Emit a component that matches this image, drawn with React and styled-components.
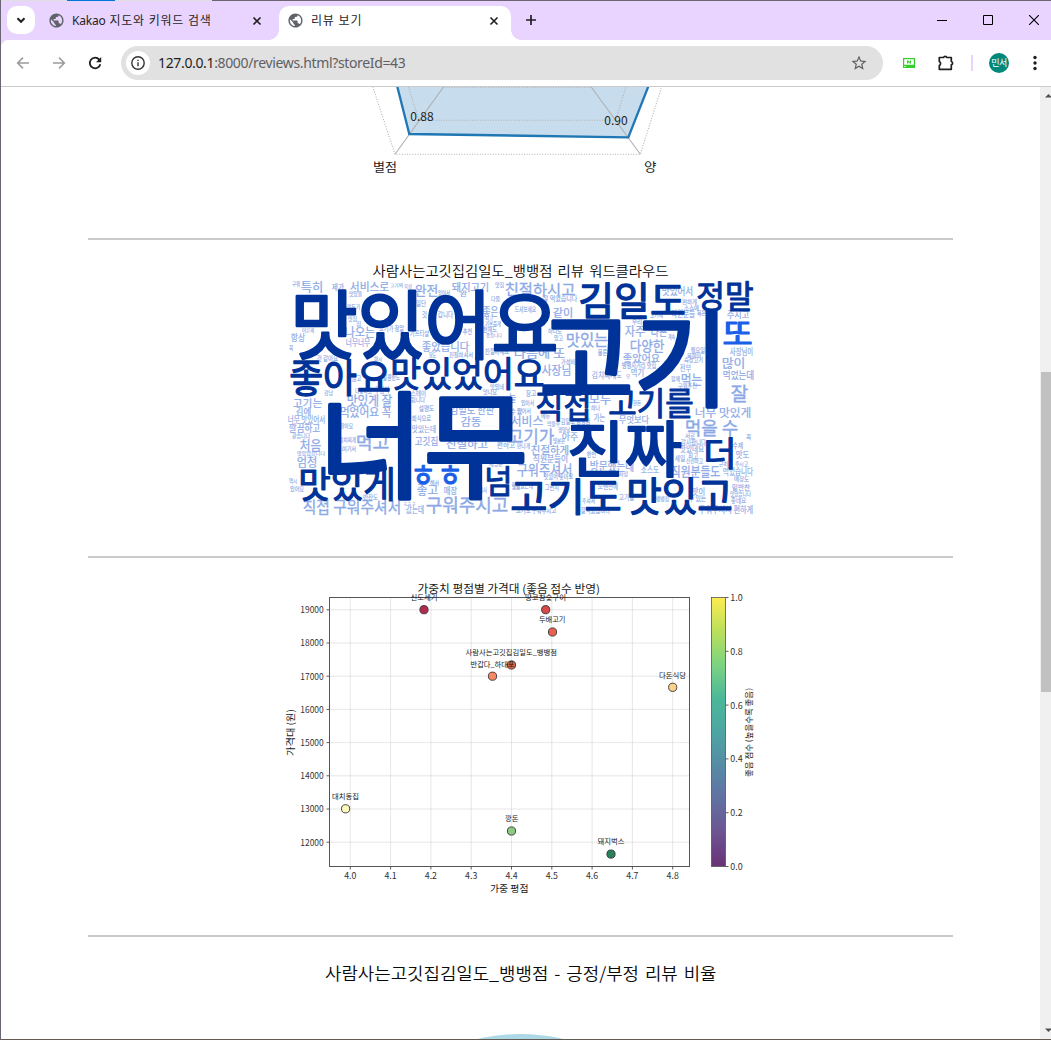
import React from "react";
import styled, { createGlobalStyle, css } from "styled-components";

const GlobalStyle = createGlobalStyle`
  *, *::before, *::after { box-sizing: border-box; }
  html, body { margin: 0; padding: 0; background: #fff; overflow: hidden; }
  body { font-family: "Noto Sans", "Noto Sans CJK KR", sans-serif; }
  svg { display: block; flex: none; }
`;

/* ---------- window chrome ---------- */

const Window = styled.div`
  width: 1051px;
  height: 1040px;
  display: flex;
  flex-direction: column;
  overflow: hidden;
  border-left: 1px solid #6d6572;
  border-bottom: 1px solid #635b53;
  background: #fff;
`;

const TopEdge = styled.div`
  height: 1px;
  flex: none;
  background: linear-gradient(to right, #dedede 66px, #0078d7 66px 114px, #dedede 114px 211px, #6d6572 211px);
`;

const TabStrip = styled.div`
  height: 39px;
  flex: none;
  display: flex;
  padding: 5px 0 0 6px;
  background: #e8d4fe;
`;

const TabSearch = styled.button`
  width: 28px;
  height: 28px;
  padding: 0;
  border: 0;
  border-radius: 10px;
  background: #fff;
  display: grid;
  place-items: center;
`;

const Tab = styled.div`
  position: relative;
  height: 34px;
  width: ${(p) => p.$width}px;
  display: flex;
  align-items: center;
  padding: 0 9px 5px 8px;
  gap: ${(p) => p.$gap}px;
  margin-left: ${(p) => p.$offset}px;
  ${(p) =>
    p.$active &&
    css`
      background: #fff;
      border-radius: 10px 10px 0 0;
      &::before,
      &::after {
        content: "";
        position: absolute;
        bottom: 0;
        width: 10px;
        height: 10px;
      }
      &::before {
        left: -10px;
        background: radial-gradient(circle at 0 0, transparent 9.5px, #fff 10px);
      }
      &::after {
        right: -10px;
        background: radial-gradient(circle at 100% 0, transparent 9.5px, #fff 10px);
      }
    `}
`;

const TabTitle = styled.span`
  flex: 1;
  font-size: 12px;
  line-height: 20px;
  letter-spacing: ${(p) => p.$tracking}px;
  color: #1f1f1f;
  white-space: nowrap;
  padding-top: 1px;
`;

const Latin = styled.span`
  letter-spacing: -0.2px;
`;

const NewTab = styled.div`
  margin-left: 13px;
  height: 28px;
  display: flex;
  align-items: center;
`;

const WindowControls = styled.div`
  margin-left: auto;
  height: 28px;
  display: flex;
  align-items: center;
  gap: 36px;
  padding-right: 12px;
`;

const Toolbar = styled.div`
  height: 47px;
  flex: none;
  display: flex;
  align-items: center;
  border-bottom: 1px solid #cbcbcb;
  background: radial-gradient(circle at 8px 8px, #fff 8px, transparent 8.5px) 0 0 / 8px 8px no-repeat,
    linear-gradient(#fff, #fff) 8px 0 no-repeat,
    linear-gradient(#fff, #fff) 0 8px no-repeat, #e8d4fe;
`;

const NavButtons = styled.div`
  display: flex;
  gap: 20px;
  padding-left: 14px;
  width: 120px;
`;

const Omnibox = styled.div`
  width: 762px;
  height: 34px;
  border-radius: 17px;
  background: #e1e1e1;
  display: flex;
  align-items: center;
  padding: 0 15px 0 5px;
`;

const SiteInfo = styled.span`
  width: 24px;
  height: 24px;
  border-radius: 50%;
  background: #fff;
  display: grid;
  place-items: center;
  margin-right: 8px;
`;

const Address = styled.span`
  flex: 1;
  font-size: 14px;
  line-height: 20px;
  letter-spacing: -0.35px;
  color: #5f6063;
  b { font-weight: 400; color: #1f1f1f; }
`;

const Extensions = styled.div`
  display: flex;
  align-items: center;
  padding-left: 20px;
`;

const Divider = styled.span`
  width: 2px;
  height: 16px;
  background: #e8d4fe;
  margin: 0 16px;
`;

const Avatar = styled.span`
  width: 20px;
  height: 20px;
  border-radius: 50%;
  background: #00897b;
  color: #fff;
  font-size: 9px;
  line-height: 19px;
  text-align: center;
  letter-spacing: -0.6px;
  margin-right: 24px;
`;

/* ---------- page ---------- */

const Viewport = styled.div`
  flex: 1;
  min-height: 0;
  display: flex;
`;

const Page = styled.main`
  width: 1039px;
  display: flex;
  flex-direction: column;
  align-items: center;
  overflow: hidden;
`;

const Rule = styled.hr`
  width: 865px;
  height: 2px;
  flex: none;
  border: 0;
  margin: 0;
  background: #cacaca;
`;

const ScrollBar = styled.div`
  width: 11px;
  height: 100%;
  flex: none;
  overflow: hidden;
  background: #f0f0f0;
  display: flex;
  flex-direction: column;
`;

const ScrollArrow = styled.div`
  height: 17px;
  padding: 6px 0 0 5px;
`;

const Thumb = styled.div`
  height: 320px;
  margin: 268px 0 auto 1px;
  background: #c1c1c1;
`;

const Figure = styled.svg`
  font-family: "Noto Sans CJK KR", sans-serif;
`;

const Heading = styled.g`
  font-weight: 350;
  word-spacing: 0.12em;
  fill: #0a0a0a;
`;

const Words = styled.g`
  fill: ${(p) => p.$color};
  stroke: ${(p) => p.$color};
  stroke-linejoin: round;
`;

/* ---------- icons ---------- */

const Globe = () => (
  <svg width="17" height="17" viewBox="0 0 24 24" fill="#5f6368">
    <path d="M12 2C6.480 2 2 6.480 2 12s4.480 10 10 10 10-4.480 10-10S17.520 2 12 2zm-1 17.930c-3.950-.49-7-3.850-7-7.930 0-.62.08-1.210.21-1.790L9 15v1c0 1.100.9 2 2 2v1.930zm6.900-2.540c-.26-.81-1-1.390-1.900-1.390h-1v-3c0-.55-.45-1-1-1H8v-2h2c.55 0 1-.45 1-1V7h2c1.100 0 2-.9 2-2v-.41c2.930 1.190 5 4.060 5 7.410 0 2.080-.8 3.970-2.100 5.390z" />
  </svg>
);

const Stroke = ({ size = 16, width = 1.6, color = "#1f1f1f", d }) => (
  <svg width={size} height={size} viewBox={`0 0 ${size} ${size}`} fill="none" stroke={color} strokeWidth={width}>
    <path d={d} />
  </svg>
);

const CloseIcon = () => <Stroke width={1.6} d="M4.500 4.500l7 7M11.500 4.500l-7 7" />;

/* ---------- chart text ---------- */

// Places a label so that it fills the given horizontal span.
const Label = ({ x1, x2, y, size, children, ...rest }) => (
  <text x={x1} y={y} fontSize={size} textLength={x2 - x1} lengthAdjust="spacingAndGlyphs" {...rest}>
    {children}
  </text>
);

const Radar = () => (
  <Figure width="865" height="151" viewBox="88 87 865 151">
    <path d="M397.3 86.7L409.3 134 628.3 137.3 648.3 86.7z" fill="#c7dcec" />
    <g fill="none" stroke="#b0b0b0" strokeWidth="1.1">
      <path d="M395 154.3L443.7 86.7M640.3 154.3L591 86.7" />
      <path d="M372.7 86.7L395 154.3H640.3L661.7 86.7M408.3 86.7L419 120.3H615.7L626 86.7M443.7 87.3H591" strokeDasharray="1 1.6" />
    </g>
    <path d="M396.8 84.7L409.3 134 628.3 137.3 649 84.7" fill="none" stroke="#1f77b4" strokeWidth="2.3" />
    <g fill="#1c1c1c">
      <Label x1={410.3} x2={433.7} y={121} size={12}>0.88</Label>
      <Label x1={604.3} x2={627.7} y={124.700} size={12}>0.90</Label>
      <Label x1={373} x2={397} y={171.5} size={12.5}>별점</Label>
      <Label x1={644} x2={656.5} y={171.5} size={12.5}>양</Label>
    </g>
  </Figure>
);

/* Each word carries the box that its glyphs fill: left, top, right, bottom. */
const headWords = [
  ["맛있어요", 292, 290, 557, 359],
  ["고기", 541, 311, 727, 407],
  ["너무", 321, 392, 526, 499],
  ["김일도", 579, 282, 685, 318],
  ["정말", 697, 282, 753, 311],
  ["좋아요", 290, 359, 390, 395],
  ["맛있었어요", 391, 358, 544, 390],
  ["직접", 536, 392, 591, 421],
  ["고기를", 609, 389, 693, 418],
  ["진짜", 568, 421, 681, 477],
  ["더", 704, 438, 736, 469],
  ["고기도", 511, 478, 621, 514],
  ["맛있고", 627, 477, 732, 514],
  ["넘", 485, 467, 512, 496],
  ["맛있게", 299, 468, 395, 501],
];

const accentWords = [
  ["또", 723, 319, 752, 346],
  ["ㅎ", 411, 461, 435, 489],
  ["ㅎ", 438, 461, 462, 489],
];

const minorWords = [
  ["구워", 292, 281, 300, 286], ["특히", 301, 282, 323, 293], ["제가", 332, 284, 344, 291],
  ["서비스로", 350, 282, 389, 292], ["고기의", 390, 283, 403, 287], ["육상", 404, 284, 412, 288],
  ["맛있을", 349, 291, 362, 296], ["완전", 415, 284, 438, 296], ["있어서", 438, 290, 450, 295],
  ["돼지고기", 452, 283, 489, 292], ["완", 460, 291, 467, 297], ["맛집", 495, 282, 504, 287],
  ["친절하시고", 505, 282, 575, 296], ["다들", 491, 296, 500, 301], ["잘 먹었습니다", 543, 296, 577, 302],
  ["일단", 416, 301, 426, 307], ["깍두기", 347, 304, 360, 309], ["맛집", 348, 316, 357, 321],
  ["집", 356, 321, 361, 326], ["것", 422, 312, 427, 318], ["갑니다", 438, 312, 453, 318],
  ["어른께", 302, 328, 314, 332], ["고기가 정말", 379, 326, 404, 332], ["기프티샬", 410, 331, 429, 337],
  ["추천", 463, 329, 472, 335], ["좋은", 483, 307, 498, 317], ["최고", 485, 316, 493, 320],
  ["기본중게", 485, 321, 501, 326], ["현재도", 483, 327, 497, 333], ["좋습니다", 486, 333, 502, 337],
  ["드셔보세요", 515, 307, 536, 313], ["같이", 553, 308, 573, 318], ["술", 551, 319, 556, 324],
  ["하나도", 548, 328, 562, 333], ["있고", 554, 335, 563, 340], ["항상", 291, 334, 305, 342],
  ["꼭", 289, 345, 293, 350], ["것 같아요", 317, 356, 338, 362], ["하시", 374, 356, 382, 361],
  ["나오는", 345, 327, 375, 338], ["너무너무", 346, 339, 370, 347], ["좋았습니다", 422, 342, 469, 352],
  ["달도", 429, 352, 436, 357], ["친절하셔서", 449, 352, 473, 357], ["친절하세요", 485, 349, 509, 355],
  ["다음에 또", 514, 348, 565, 359], ["맛있는", 566, 332, 608, 347], ["물론", 598, 350, 607, 356],
  ["가성비", 561, 359, 575, 364], ["사장님", 542, 365, 571, 376], ["자주", 625, 326, 645, 337],
  ["다른", 651, 328, 667, 337], ["계속", 668, 334, 675, 339], ["다양한", 630, 339, 664, 352],
  ["좋았어요", 623, 354, 660, 363], ["뱅뱅사거리 맛집", 622, 363, 656, 369], ["김치찌개도", 592, 372, 622, 379],
  ["오", 626, 374, 630, 378], ["먹기", 631, 369, 644, 377], ["전부", 680, 365, 691, 372],
  ["함께", 671, 376, 680, 381], ["먹는", 681, 373, 702, 385], ["맛있어서", 662, 287, 693, 296],
  ["편하게", 682, 299, 697, 304], ["소스에", 684, 305, 699, 310], ["직원분들", 671, 310, 695, 318],
  ["볶은", 697, 310, 706, 315], ["고기에", 650, 312, 663, 317], ["우리", 632, 319, 642, 324],
  ["월요일", 691, 348, 705, 354], ["목살이", 687, 353, 701, 358], ["숙성고기", 684, 357, 703, 362],
  ["주시고", 727, 311, 749, 319], ["사장님이", 730, 348, 753, 356], ["많이", 722, 358, 745, 369],
  ["먹었는데", 723, 371, 754, 380], ["않고", 352, 376, 361, 382], ["달콤한도", 383, 375, 400, 381],
  ["고기는", 293, 399, 322, 408], ["강남", 324, 390, 333, 395], ["다양하고", 355, 388, 372, 393],
  ["구성이", 375, 387, 389, 394], ["맛있게 잘", 347, 394, 392, 406], ["김에", 296, 408, 311, 416],
  ["먹었어요 꼭", 340, 407, 391, 418], ["너무 맛있어서", 288, 416, 325, 424], ["깔끔하고", 289, 424, 320, 433],
  ["같습니다", 292, 433, 310, 438], ["처음", 300, 439, 321, 451], ["맛있었습니다", 297, 451, 325, 455],
  ["엄청", 297, 457, 317, 468], ["할아요", 340, 423, 353, 428], ["김치찌개", 339, 437, 356, 442],
  ["여기서", 342, 446, 356, 451], ["먹고", 356, 434, 389, 450], ["스테이", 411, 391, 426, 397],
  ["됩니다", 411, 397, 425, 402], ["설명도", 419, 406, 434, 412], ["회식으로", 412, 416, 431, 422],
  ["맛있는데", 412, 426, 436, 433], ["고깃집", 415, 437, 438, 446], ["김일도 한판", 450, 406, 494, 415],
  ["감동", 461, 417, 481, 427], ["친절하고", 446, 439, 488, 449], ["편하고", 497, 441, 515, 449],
  ["맛있네", 490, 384, 504, 389], ["맛나요", 483, 389, 497, 394], ["늘", 509, 394, 516, 403],
  ["수 있", 511, 409, 522, 415], ["역시", 289, 478, 297, 483], ["있어요", 290, 486, 304, 491],
  ["반찬도", 363, 494, 378, 499], ["해서", 430, 480, 439, 485], ["좋고", 417, 485, 438, 496],
  ["매장", 444, 487, 457, 495], ["재방문", 489, 461, 503, 466], ["직접 구워주셔서", 303, 499, 401, 514],
  ["ㅎㅎㅎ", 403, 501, 416, 505], ["갔는데", 406, 506, 424, 514], ["구워주시고", 426, 497, 508, 514],
  ["식사", 479, 487, 487, 492], ["맛있", 512, 484, 520, 489], ["모두", 589, 394, 611, 405],
  ["잘", 731, 385, 748, 403], ["구워주신", 678, 383, 697, 388], ["장고", 526, 391, 536, 397],
  ["있어서", 521, 400, 534, 405], ["있어서", 517, 408, 531, 413], ["메뉴", 541, 413, 550, 418],
  ["하나", 591, 405, 600, 410], ["한돈", 633, 400, 641, 405], ["서비스", 511, 416, 543, 427],
  ["먹을수", 547, 421, 560, 426], ["김일도 뱅뱅점", 561, 419, 590, 425], ["가는", 594, 414, 605, 422],
  ["무엇보다", 619, 416, 649, 424], ["너무 맛있게", 695, 408, 751, 418], ["먹을 수", 685, 420, 738, 437],
  ["고기가", 508, 428, 554, 444], ["생일날", 558, 427, 570, 432], ["몇분은", 553, 438, 565, 443],
  ["아주", 562, 433, 578, 441], ["만나게", 517, 443, 530, 448], ["친절하게", 531, 446, 569, 455],
  ["직원분들이", 533, 455, 568, 463], ["한번", 587, 452, 596, 458], ["구워주셔서", 517, 463, 572, 476],
  ["맛있어 좋아요", 544, 474, 573, 480], ["방문했는데", 590, 461, 634, 472], ["사장", 619, 471, 628, 476],
  ["소스도", 641, 466, 659, 474], ["직원분들도", 671, 465, 720, 477], ["먹었습니다", 723, 468, 753, 476],
  ["서로", 685, 433, 695, 438], ["꼭", 746, 434, 751, 439], ["감사합니다", 681, 440, 706, 446],
  ["맛있네요", 680, 446, 704, 453], ["최고", 688, 453, 698, 458], ["세일", 675, 456, 685, 462],
  ["신선하고", 686, 458, 703, 463], ["수제", 733, 443, 743, 449], ["맛도", 736, 451, 749, 459],
  ["근처", 719, 461, 728, 466], ["주시고", 735, 461, 748, 466], ["매장도", 734, 476, 749, 481],
  ["맛있었는데", 512, 483, 533, 489], ["그런지", 545, 485, 559, 491], ["오랜만에", 598, 484, 618, 490],
  ["고기도 구워주시고", 516, 508, 556, 514], ["주셔서", 582, 498, 595, 503], ["잘먹었습니다", 581, 508, 610, 514],
  ["고기질", 619, 495, 634, 501], ["뱅뱅점", 656, 496, 669, 501], ["맛이", 692, 488, 705, 496],
  ["수 있는", 689, 496, 706, 502], ["밑반찬", 732, 485, 750, 491], ["맛있습니다", 730, 491, 751, 496],
  ["좋네요", 731, 498, 746, 504], ["구워주셔서 편하게", 699, 506, 753, 514],
];

const CloudWord = ({ word: [text, x1, y1, x2, y2], weight }) => {
  const size = (y2 - y1) / 0.92;
  return (
    <Label x1={x1 - size * 0.02} x2={x2 + size * 0.02} y={y2 - size * 0.085} size={size} strokeWidth={size * weight}>
      {text}
    </Label>
  );
};

const WordCloud = () => (
  <Figure width="865" height="316" viewBox="88 240 865 316">
    <Heading>
      <Label x1={372.5} x2={668.5} y={276} size={14}>사람사는고깃집김일도_뱅뱅점 리뷰 워드클라우드</Label>
    </Heading>
    <Words $color="#8ca9e6">{minorWords.map((w, i) => <CloudWord key={i} word={w} weight={0.02} />)}</Words>
    <Words $color="#003399">{headWords.map((w, i) => <CloudWord key={i} word={w} weight={0.034} />)}</Words>
    <Words $color="#1a5fe8">{accentWords.map((w, i) => <CloudWord key={i} word={w} weight={0.04} />)}</Words>
  </Figure>
);

const stores = [
  ["신도세기", 424, 609.7, "#b52a50", 410.5, 437.5],
  ["땅코참숯구이", 545.7, 609.7, "#d64a4b", 525, 566],
  ["두배고기", 552.5, 632, "#e8614f", 539, 565.5],
  ["사람사는고깃집김일도_뱅뱅점", 511.5, 665, "#dd6544", 465.5, 557],
  ["반갑다_하대포", 492.5, 676.2, "#f58a64", 470.5, 514.5],
  ["다돈식당", 672.7, 687.3, "#fbd08b", 659, 686],
  ["대치동집", 345.6, 808.8, "#fcf9bd", 332, 359],
  ["깡돈", 511.5, 831, "#8acb7e", 505, 518.5],
  ["돼지벅스", 611, 854.1, "#268059", 597.5, 624.5],
];

const ratingTicks = Array.from({ length: 9 }, (_, i) => [(4 + i / 10).toFixed(1), 350.3 + i * 40.3]);
const priceTicks = Array.from({ length: 8 }, (_, i) => [12000 + i * 1000, 842.2 - i * 33.2]);
const scoreTicks = ["0.0", "0.2", "0.4", "0.6", "0.8", "1.0"].map((t, i) => [t, 866.5 - i * 53.8]);

const PriceChart = () => (
  <Figure width="865" height="377" viewBox="88 558 865 377">
    <defs>
      <linearGradient id="score" x1="0" y1="1" x2="0" y2="0">
        <stop offset="0" stopColor="#693376" />
        <stop offset="0.125" stopColor="#6c5391" />
        <stop offset="0.25" stopColor="#6270a2" />
        <stop offset="0.375" stopColor="#568ba5" />
        <stop offset="0.5" stopColor="#4da6a3" />
        <stop offset="0.625" stopColor="#4bb898" />
        <stop offset="0.75" stopColor="#7dd382" />
        <stop offset="0.875" stopColor="#bbe05a" />
        <stop offset="1" stopColor="#fdec51" />
      </linearGradient>
    </defs>
    <g stroke="#b0b0b0" strokeOpacity="0.3" strokeWidth="1">
      {ratingTicks.map(([t, x]) => <path key={t} d={`M${x} 597.5V866.5`} />)}
      {priceTicks.map(([t, y]) => <path key={t} d={`M329.5 ${y}H689.5`} />)}
    </g>
    <g stroke="#333" strokeWidth="0.8">
      {ratingTicks.map(([t, x]) => <path key={t} d={`M${x} 866.5v3`} />)}
      {priceTicks.map(([t, y]) => <path key={t} d={`M329.5 ${y}h-3`} />)}
      {scoreTicks.map(([t, y]) => <path key={t} d={`M725.5 ${y}h3`} />)}
    </g>
    {stores.map(([name, x, y, color]) => (
      <circle key={name} cx={x} cy={y} r="4.1" fill={color} stroke="#333" strokeWidth="0.9" />
    ))}
    <rect x="329.5" y="597.5" width="360" height="269" fill="none" stroke="#555" strokeWidth="1" />
    <rect x="711.5" y="597.5" width="14" height="269" fill="url(#score)" stroke="#555" strokeWidth="0.8" />
    <g fill="#333">
      {ratingTicks.map(([t, x]) => <Label key={t} x1={x - 6.1} x2={x + 6.1} y={879.2} size={8.8}>{t}</Label>)}
      {priceTicks.map(([t, y]) => <Label key={t} x1={300.3} x2={323.7} y={y + 3.4} size={8.8}>{t}</Label>)}
      {scoreTicks.map(([t, y]) => <Label key={t} x1={730.3} x2={742.7} y={y + 3.4} size={8.8}>{t}</Label>)}
    </g>
    <g fill="#161616">
      {stores.map(([name, , y, , x1, x2]) => <Label key={name} x1={x1} x2={x2} y={y - 9.7} size={7.4}>{name}</Label>)}
      <Label x1={417.5} x2={600} y={593} size={11.2}>가중치 평점별 가격대 (좋음 점수 반영)</Label>
      <Label x1={490} x2={528.5} y={891.7} size={9.6}>가중 평점</Label>
      <Label x1={-23.5} x2={23.5} y={3.6} size={9.6} transform="translate(290.5 732.5) rotate(-90)">가격대 (원)</Label>
      <Label x1={-44.5} x2={44.5} y={3} size={8.2} transform="translate(749.3 732.5) rotate(-90)">좋음 점수 (높을수록 좋음)</Label>
    </g>
  </Figure>
);

const SentimentChart = () => (
  <Figure width="865" height="102" viewBox="88 937 865 102">
    <Heading>
      <Label x1={325} x2={716.5} y={979.5} size={17.4}>사람사는고깃집김일도_뱅뱅점 - 긍정/부정 리뷰 비율</Label>
    </Heading>
    <circle cx="520.5" cy="1221" r="187" fill="#add8e6" />
  </Figure>
);

export default function App() {
  return (
    <>
      <GlobalStyle />
      <Window>
        <TopEdge />
        <TabStrip>
          <TabSearch aria-label="탭 검색">
            <Stroke width={2} d="M4.500 6.300L8 9.800l3.500-3.500" />
          </TabSearch>
          <Tab $width={234} $gap={7} $offset={5}>
            <Globe />
            <TabTitle $tracking={0.75}><Latin>Kakao</Latin> 지도와 키워드 검색</TabTitle>
            <CloseIcon />
          </Tab>
          <Tab $active $width={232} $gap={7} $offset={5}>
            <Globe />
            <TabTitle $tracking={0.8}>리뷰 보기</TabTitle>
            <CloseIcon />
          </Tab>
          <NewTab>
            <Stroke size={14} width={1.7} d="M7 2v10M2 7h10" />
          </NewTab>
          <WindowControls>
            <Stroke size={10} width={1} color="#000" d="M0 5.500h10" />
            <Stroke size={10} width={1} color="#000" d="M.5 .5h9v9h-9z" />
            <Stroke size={10} width={1.1} color="#000" d="M0 0l10 10M10 0L0 10" />
          </WindowControls>
        </TabStrip>
        <Toolbar>
          <NavButtons>
            <Stroke width={1.5} color="#9b9b9b" d="M14 8H3M8 2.600L2.600 8 8 13.400" />
            <Stroke width={1.5} color="#9b9b9b" d="M2 8h11M8 2.600L13.400 8 8 13.400" />
            <svg width="16" height="16" viewBox="0 0 16 16">
              <path d="M13.300 9.200A5.300 5.300 0 1 1 12.200 4.600" fill="none" stroke="#1f1f1f" strokeWidth="1.8" />
              <path d="M14.200 2v5.200H9z" fill="#1f1f1f" />
            </svg>
          </NavButtons>
          <Omnibox>
            <SiteInfo>
              <svg width="16" height="16" viewBox="0 0 16 16">
                <circle cx="8" cy="8" r="6.200" fill="none" stroke="#333" strokeWidth="1.400" />
                <path d="M7.300 7.200h1.400v4H7.300zM7.300 4.700h1.400v1.400H7.300z" fill="#333" />
              </svg>
            </SiteInfo>
            <Address><b>127.0.0.1</b>:8000/reviews.html?storeId=43</Address>
            <svg width="18" height="18" viewBox="0 0 24 24" fill="#5f6063">
              <path d="M22 9.240l-7.190-.62L12 2 9.190 8.630 2 9.240l5.460 4.730L5.820 21 12 17.270 18.180 21l-1.630-7.030L22 9.240zM12 15.400l-3.760 2.270 1-4.280-3.320-2.880 4.380-.38L12 6.100l1.710 4.040 4.380.38-3.320 2.880 1 4.280L12 15.400z" />
            </svg>
          </Omnibox>
          <Extensions>
            <svg width="12" height="10" viewBox="0 0 12 10">
              <path d="M.6 .6h10.800v8.800H.6zM.6 7.300h10.800" fill="none" stroke="#35d02b" strokeWidth="1.200" />
              <path d="M4 2.500h1.200L7 4V2.500h1V5.500H7L5.200 4v1.500H4z" fill="#35d02b" />
              <path d="M3 7h8.500v2.500H3z" fill="#35d02b" />
            </svg>
            <svg width="18" height="18" viewBox="0 0 18 18" style={{ marginLeft: 22 }}>
              <path d="M2.300 3.500h4.200a1.800 1.800 0 0 1 3.400 0H14.300V7.500a1.700 1.700 0 0 1 0 3.300v4.500H2.300v-3.900a2.200 2.200 0 0 0 0-4z" fill="none" stroke="#1f1f1f" strokeWidth="1.700" strokeLinejoin="round" />
            </svg>
            <Divider />
            <Avatar>민서</Avatar>
            <svg width="4" height="16" viewBox="0 0 4 16" fill="#1f1f1f">
              <circle cx="2" cy="2.500" r="1.700" />
              <circle cx="2" cy="8" r="1.700" />
              <circle cx="2" cy="13.500" r="1.700" />
            </svg>
          </Extensions>
        </Toolbar>
        <Viewport>
          <Page>
            <Radar />
            <Rule />
            <WordCloud />
            <Rule />
            <PriceChart />
            <Rule />
            <SentimentChart />
          </Page>
          <ScrollBar>
            <ScrollArrow>
              <svg width="7" height="5" viewBox="0 0 7 5" fill="#505050"><path d="M0 4.500L3.500 1 7 4.500z" /></svg>
            </ScrollArrow>
            <Thumb />
            <ScrollArrow>
              <svg width="7" height="5" viewBox="0 0 7 5" fill="#505050"><path d="M0 .5L3.500 4 7 .5z" /></svg>
            </ScrollArrow>
          </ScrollBar>
        </Viewport>
      </Window>
    </>
  );
}
